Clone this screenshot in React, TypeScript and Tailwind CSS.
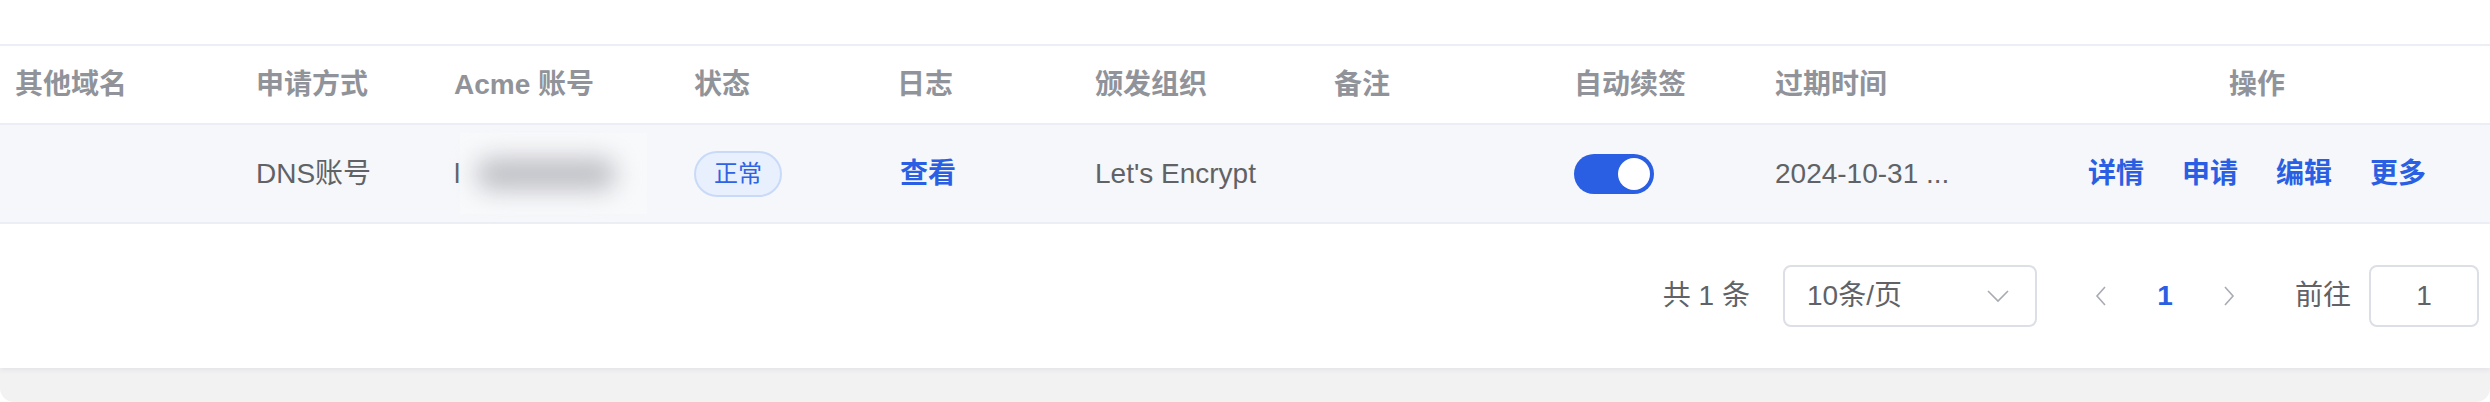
const line = "border-[#ebeef5]";

const cols = [
    { title: "其他域名", w: "w-[241px]" },
    { title: "申请方式", w: "w-[198px]" },
    { title: "Acme 账号", w: "w-[240px]" },
    { title: "状态", w: "w-[203px]" },
    { title: "日志", w: "w-[198px]" },
    { title: "颁发组织", w: "w-[239px]" },
    { title: "备注", w: "w-[240px]" },
    { title: "自动续签", w: "w-[201px]" },
    { title: "过期时间", w: "w-[285px]" },
];

function Chevron({ dir }: { dir: "left" | "right" | "down" }) {
    if (dir === "down") {
        return (
            <svg width="22" height="13" viewBox="0 0 22 13" fill="none">
                <path d="M1 1l10 10L21 1" stroke="#a8abb2" strokeWidth="1.6" />
            </svg>
        );
    }
    return (
        <svg width="12" height="20" viewBox="0 0 12 20" fill="none">
            <path
                d={dir === "left" ? "M10 1L2 10l8 9" : "M2 1l8 9-8 9"}
                stroke="#a8abb2"
                strokeWidth="1.6"
            />
        </svg>
    );
}

export default function App() {
    return (
        <div className="w-[2490px] h-[402px] bg-white font-['Liberation_Sans','Noto_Sans_CJK_SC',sans-serif] text-[28px] text-[#606266]">
            <div className="h-full bg-[#f2f2f3] rounded-b-[14px] overflow-hidden flex flex-col">
                <div className="h-[368px] bg-white shadow-[0_2px_5px_rgba(60,60,90,0.08)] flex flex-col">
                    <div className="h-[44px]" />

                    {/* header */}
                    <div className={`flex items-center h-[81px] border-t-2 border-b-2 ${line} pl-[15px] font-semibold text-[#909399]`}>
                        {cols.map((c) => (
                            <div key={c.title} className={`${c.w} shrink-0`}>
                                {c.title}
                            </div>
                        ))}
                        <div className="w-[394px] shrink-0 text-center">操作</div>
                    </div>

                    {/* row */}
                    <div className={`flex items-center h-[99px] border-b-2 ${line} bg-[#f5f7fa] pl-[15px]`}>
                        <div className="w-[241px] shrink-0" />
                        <div className="w-[198px] shrink-0">DNS账号</div>
                        <div className="w-[240px] shrink-0 flex items-center">
                            <span>l</span>
                            {/* masked account */}
                            <div className="w-[187px] h-[81px] bg-[#f8f9fb] flex items-center">
                                <div className="ml-[16px] w-[140px] h-[32px] rounded-full bg-[#bfc0c5] blur-[12px]" />
                            </div>
                        </div>
                        <div className="w-[203px] shrink-0">
                            <span className="inline-flex items-center justify-center w-[88px] h-[46px] rounded-full border-2 border-[#c9daf8] bg-[#e8effd] text-[24px] text-[#2f63e3]">
                                正常
                            </span>
                        </div>
                        <div className="w-[198px] shrink-0 pl-[3px] font-semibold text-[#2a5fe3]">查看</div>
                        <div className="w-[239px] shrink-0">Let's Encrypt</div>
                        <div className="w-[240px] shrink-0" />
                        <div className="w-[201px] shrink-0">
                            <div className="w-[80px] h-[40px] rounded-full bg-[#2a5fe3] flex items-center justify-end pr-[4px]">
                                <div className="w-[32px] h-[32px] rounded-full bg-white" />
                            </div>
                        </div>
                        <div className="w-[285px] shrink-0 whitespace-nowrap">2024-10-31 ...</div>
                        <div className="w-[394px] shrink-0 flex justify-center gap-[38px] font-semibold text-[#2a5fe3]">
                            <span>详情</span>
                            <span>申请</span>
                            <span>编辑</span>
                            <span>更多</span>
                        </div>
                    </div>

                    {/* pagination */}
                    <div className="flex-1 flex items-center justify-end pr-[11px]">
                        <span className="whitespace-pre">共 1 条</span>
                        <div className="ml-[33px] w-[254px] h-[62px] border-2 border-[#dcdfe6] rounded-[8px] flex items-center justify-between pl-[22px] pr-[26px]">
                            <span>10条/页</span>
                            <Chevron dir="down" />
                        </div>
                        <div className="ml-[32px] w-[64px] flex justify-center">
                            <Chevron dir="left" />
                        </div>
                        <div className="w-[64px] text-center font-bold text-[#2a5fe3]">1</div>
                        <div className="w-[64px] flex justify-center">
                            <Chevron dir="right" />
                        </div>
                        <span className="ml-[34px]">前往</span>
                        <div className="ml-[18px] w-[110px] h-[62px] border-2 border-[#dcdfe6] rounded-[8px] flex items-center justify-center">
                            1
                        </div>
                    </div>
                </div>
            </div>
        </div>
    );
}
